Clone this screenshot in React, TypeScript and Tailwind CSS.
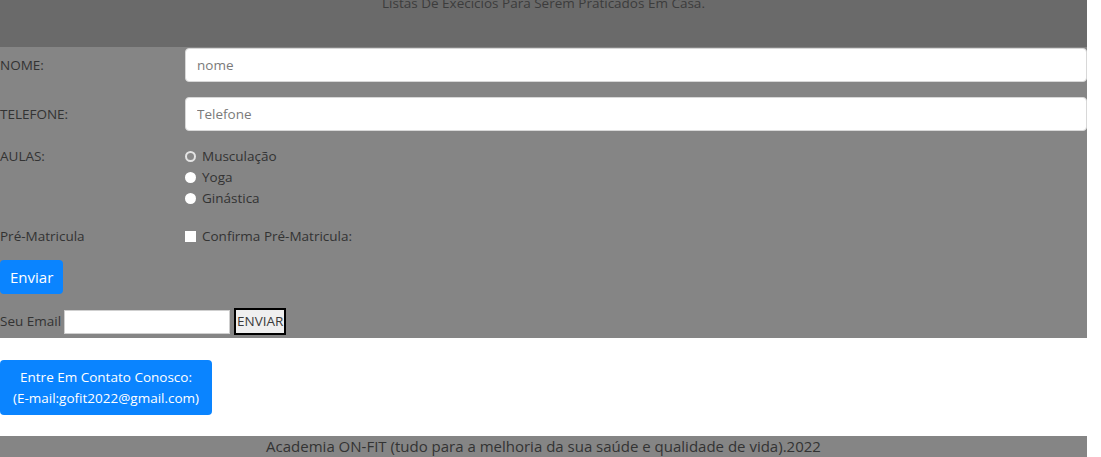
// Academia ON-FIT — formulário de pré-matrícula

const font = { fontFamily: '"Open Sans", "Noto Sans", sans-serif' };

function Radio({ label, ring }: { label: string; ring?: boolean }) {
  return (
    <label className="flex items-center h-[21px] gap-[6px]">
      {ring ? (
        <span className="w-[11px] h-[11px] rounded-full border-2 border-[#e4e4e4] bg-[#8a8a8a]" />
      ) : (
        <span className="w-[11px] h-[11px] rounded-full bg-white" />
      )}
      <span>{label}</span>
    </label>
  );
}

function Row({ label, children, className }: { label: string; children: React.ReactNode; className?: string }) {
  return (
    <div className={`flex ${className ?? ''}`}>
      <div className="w-[185px] shrink-0">{label}</div>
      <div className="flex-1">{children}</div>
    </div>
  );
}

export default function App() {
  return (
    <div className="w-[1101px] h-[457px] overflow-hidden bg-white text-[13.5px] text-[#333]" style={font}>
      <div className="w-[1087px]">
        <header className="h-[47px] bg-[#6a6a6a] text-center text-[#3c3c3c]">
          <div className="-translate-y-[7px] leading-[20px]">Listas De Execícios Para Serem Praticados Em Casa.</div>
        </header>

        <form className="bg-[#858585] pt-px pb-[3px]">
          <div className="flex items-center">
            <div className="w-[185px] shrink-0">NOME:</div>
            <input
              className="flex-1 h-[34px] rounded-[4px] border border-[#d8d8d8] bg-white px-[11px] placeholder:text-[#7a7a7a] outline-none"
              placeholder="nome"
            />
          </div>
          <div className="flex items-center mt-[15px]">
            <div className="w-[185px] shrink-0">TELEFONE:</div>
            <input
              className="flex-1 h-[34px] rounded-[4px] border border-[#d8d8d8] bg-white px-[11px] placeholder:text-[#7a7a7a] outline-none"
              placeholder="Telefone"
            />
          </div>

          <Row label="AULAS:" className="mt-[15px] leading-[21px]">
            <div>
              <Radio label="Musculação" ring />
              <Radio label="Yoga" />
              <Radio label="Ginástica" />
            </div>
          </Row>

          <Row label="Pré-Matricula" className="mt-[17px] leading-[21px]">
            <label className="flex items-center gap-[6px]">
              <span className="w-[11px] h-[11px] bg-white" />
              <span>Confirma Pré-Matricula:</span>
            </label>
          </Row>

          <button type="button" className="mt-[13px] h-[34px] px-[10px] rounded-[4px] bg-[#0a84ff] text-white text-[15px]">
            Enviar
          </button>

          <div className="flex items-center mt-[14px] h-[27px]">
            <span>Seu Email</span>
            <input className="ml-[3px] w-[166px] h-[24px] bg-white border border-[#cfcfcf] outline-none" />
            <button type="button" className="ml-[4px] h-[27px] px-[1px] border-2 border-black bg-[#efefef] text-[#3b3b3b]">
              ENVIAR
            </button>
          </div>
        </form>

        <div className="pt-[22px] pb-[21px]">
          <button type="button" className="w-[212px] h-[55px] rounded-[4px] bg-[#0a84ff] text-white leading-[21px]">
            Entre Em Contato Conosco:
            <br />
            (E-mail:gofit2022@gmail.com)
          </button>
        </div>

        <footer className="h-[30px] bg-[#858585] text-center text-[15px] leading-[21px] text-[#333]">
          Academia ON-FIT (tudo para a melhoria da sua saúde e qualidade de vida).2022
        </footer>
      </div>
    </div>
  );
}
